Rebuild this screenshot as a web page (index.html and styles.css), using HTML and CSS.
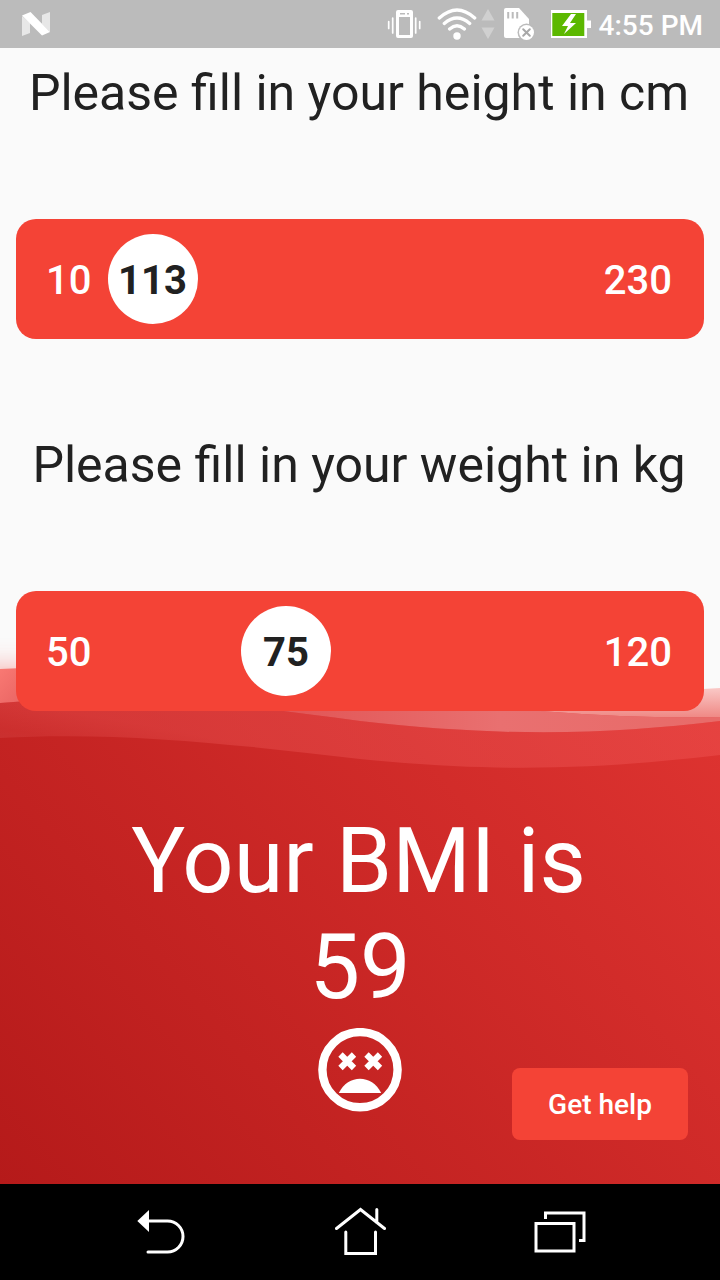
FILE: index.html
```html
<!DOCTYPE html>
<html lang="en">
<head>
<meta charset="utf-8">
<title>BMI calculator</title>
<link rel="stylesheet" href="styles.css">
</head>
<body>
<div class="phone">
  <header class="status">
    <svg class="n-logo" viewBox="0 0 28 24" width="28" height="24"><path fill="#e7e7e7" d="M0 4l8 7v10l-8 3zM20 3l8-3v20l-8-8z"/><path fill="#fff" d="M0 3.500L8.500 0 28 20l-8 3.500z"/></svg>
    <div class="status-icons">
      <svg viewBox="370 0 225 48" width="225" height="48">
        <path fill="#fff" fill-rule="evenodd" d="M398 10h13q2 0 2 2v24q0 2-2 2h-13q-2 0-2-2v-24q0-2 2-2zM399 17v18h11v-18zM400 13v1.500h5v-1.500zM407 13v1.500h2v-1.500z"/>
        <path stroke="#fff" stroke-width="1.700" stroke-linecap="round" d="M388.700 21.500v7M392.700 18v15M415.700 18v15M419.700 21.500v7"/>
        <g fill="none" stroke="#fff" stroke-width="3.300" stroke-linecap="round"><path d="M439.300 18Q457 2 474.700 18M444.300 23.500Q457 12.500 469.700 23.500M449.600 29Q457 22.500 464.400 29"/></g>
        <circle cx="457" cy="36" r="3.700" fill="#fff"/>
        <path fill="#d0d0d0" d="M481.500 20.500L488 9l6.500 11.500zM481.500 27.500L488 39l6.500-11.500z"/>
        <path fill="#fff" d="M504 10q0-2 2-2h13l10 11v19h-23q-2 0-2-2z"/>
        <path stroke="#bbb" stroke-width="2" d="M508.200 12v6.500M512.700 12v6.500M517.200 12v6.500"/>
        <circle cx="526.500" cy="32.500" r="9" fill="#bbb"/><circle cx="526.500" cy="32.500" r="7.500" fill="#fff"/>
        <path stroke="#a8a8a8" stroke-width="2" stroke-linecap="round" d="M523.200 29.200l6.600 6.600M529.800 29.200l-6.600 6.600"/>
        <path fill="#fff" d="M551 10h36v10.500h4v7.500h-4v10h-36z"/><path fill="#5cb800" d="M552.300 13h32v23h-32z"/>
        <path fill="#fff" d="M571 14l-9 12h6l-4 8 12-11h-6l6-9z"/>
      </svg>
      <span class="clock">4:55 PM</span>
    </div>
  </header>
  <main class="screen">
    <svg class="waves" viewBox="0 590 720 594" width="720" height="594" aria-hidden="true">
      <defs>
        <linearGradient id="base" gradientUnits="userSpaceOnUse" x1="30" y1="1220" x2="690" y2="650"><stop stop-color="#b51a1a"/><stop offset="1" stop-color="#df3431"/></linearGradient>
        <linearGradient id="fadeA" gradientUnits="userSpaceOnUse" x1="0" y1="685" x2="0" y2="718"><stop stop-color="#fbcfcd"/><stop offset="1" stop-color="#ef8783"/></linearGradient>
        <linearGradient id="fadeB" gradientUnits="userSpaceOnUse" x1="0" y1="665" x2="80" y2="735"><stop stop-color="#fa7a74"/><stop offset=".55" stop-color="#e25c5c"/><stop offset="1" stop-color="#e25757"/></linearGradient>
        <linearGradient id="fadeB2" gradientUnits="userSpaceOnUse" x1="300" y1="0" x2="700" y2="0"><stop stop-color="#e97070" stop-opacity="0"/><stop offset=".5" stop-color="#e97070"/><stop offset="1" stop-color="#e86b69"/></linearGradient>
        <linearGradient id="fadeC" gradientUnits="userSpaceOnUse" x1="0" y1="700" x2="-12" y2="768"><stop stop-color="#ff7070" stop-opacity=".25"/><stop offset=".4" stop-color="#ff7777" stop-opacity=".14"/><stop offset="1" stop-color="#fff" stop-opacity=".03"/></linearGradient>
        <filter id="glow" x="-20%" y="-100%" width="140%" height="300%"><feGaussianBlur stdDeviation="14"/></filter>
      </defs>
      <path filter="url(#glow)" fill="#f36d69" opacity=".6" d="M-60 673C100 654 220 710 420 725S650 728 780 708V770H-60z"/>
      <path fill="url(#fadeA)" d="M400 711C520 704 620 694 720 688V730H400z"/>
      <path fill="url(#fadeB)" d="M0 669C180 658 360 694 540 711C615 717 670 718 720 717V760H0z"/>
      <path fill="url(#fadeB2)" d="M0 669C180 658 360 694 540 711C615 717 670 718 720 717V760H0z"/>
      <path fill="url(#base)" d="M0 703C150 690 260 708 360 721C510 738 610 734 720 721V1184H0z"/>
      <path fill="url(#fadeC)" d="M0 703C150 690 260 708 360 721C510 738 610 734 720 721V780H0z"/>
      <path fill="url(#base)" d="M0 738C120 731 240 745 360 759C500 773 600 769 720 755V1184H0z"/>
    </svg>
    <h2 class="question">Please fill in your height in cm</h2>
    <div class="slider"><span>10</span><span>230</span><b class="knob height">113</b></div>
    <h2 class="question weight-title">Please fill in your weight in kg</h2>
    <div class="slider"><span>50</span><span>120</span><b class="knob weight">75</b></div>
    <section class="result">
      <p class="bmi">Your BMI is</p>
      <p class="bmi value">59</p>
      <svg class="face" viewBox="0 0 84 84" width="84" height="84"><circle cx="42" cy="41.700" r="37.600" fill="none" stroke="#fff" stroke-width="8.400"/><path stroke="#fff" stroke-width="6.200" d="M22.500 26.500l13.500 13.500M36 26.500l-13.500 13.500M48.500 26.500l13.500 13.500M62 26.500l-13.500 13.500"/><path fill="#fff" d="M20.800 65C30 46 54 46 63.200 65z"/></svg>
    </section>
    <button class="help">Get help</button>
  </main>
  <nav class="nav">
    <svg viewBox="0 0 50 50" width="50" height="50"><path fill="#fff" d="M1.300 16L13 5v22z"/><path fill="none" stroke="#fff" stroke-width="3" stroke-linecap="round" d="M12 16h19.500a15.500 15.500 0 0 1 0 31H12"/></svg>
    <svg viewBox="0 0 52 50" width="52" height="50"><g fill="none" stroke="#fff" stroke-width="3" stroke-linecap="round"><path d="M2.500 23.500L26.500 4.500l24 19M42.800 4.500v13M11.800 27v21.500H41.500V27"/></g></svg>
    <svg viewBox="0 0 52 50" width="52" height="50"><path fill="none" stroke="#fff" stroke-width="3" d="M2 18.500h38v27.500H2zM11.500 14V8H50v27.500h-5"/></svg>
  </nav>
</div>
</body>
</html>
```

FILE: styles.css
```css
* { box-sizing: border-box; }
body { margin: 0; font-family: Roboto, "Liberation Sans", sans-serif; }
.phone { display: flex; flex-direction: column; width: 720px; height: 1280px; background: #fafafa; overflow: hidden; }
svg { display: block; flex: none; }
.status { display: flex; justify-content: space-between; align-items: center; height: 48px; padding: 0 17px 0 22px; background: #bbb; }
.status-icons { display: flex; align-items: center; gap: 4px; }
.clock { font-size: 28px; font-weight: 500; line-height: 48px; color: #fff; padding-top: 3px; white-space: nowrap; }
.screen { position: relative; isolation: isolate; flex: 1; display: flex; flex-direction: column; padding: 0 16px; }
.waves { position: absolute; left: 0; bottom: 0; z-index: -1; }
.question { margin: 15px 0 96px; padding-right: 2px; font-size: 50px; font-weight: 400; line-height: 60px; color: #212121; text-align: center; white-space: nowrap; }
.weight-title { margin-top: 96px; }
.slider { position: relative; display: flex; flex: none; align-items: center; justify-content: space-between; height: 120px; padding: 2px 32px 0 30px; border-radius: 20px; background: #f44336; color: #fff; font-size: 40px; font-weight: 500; }
.knob { position: absolute; top: 15px; display: grid; place-items: center; width: 90px; height: 90px; padding-top: 2px; border-radius: 50%; background: #fff; color: #212121; font-weight: 700; }
.height { left: 92px; padding-right: 1px; }
.weight { left: 225px; }
.result { display: flex; flex-direction: column; align-items: center; margin-top: 98px; color: #fff; }
.bmi { margin: 0; padding-right: 3px; font-size: 90px; line-height: 106px; text-align: center; }
.value { margin-bottom: 7px; padding-right: 0; }
.help { position: absolute; right: 32px; bottom: 44px; width: 176px; height: 72px; border: 0; border-radius: 8px; background: #f44336; color: #fff; font: 500 28px Roboto, sans-serif; }
.nav { display: flex; justify-content: space-between; height: 96px; padding: 21px 134px 0 136px; background: #000; }
```
